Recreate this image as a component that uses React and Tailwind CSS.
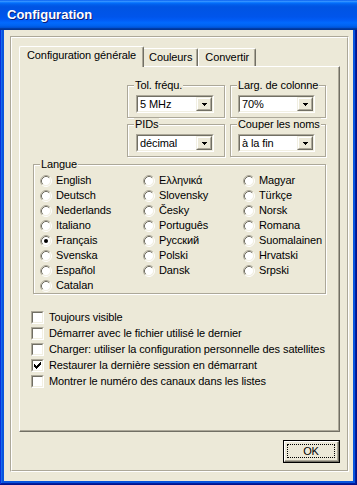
import React from 'react'

const Radio = ({ checked }) => (
  <svg width="12" height="12" viewBox="0 0 12 12" className="shrink-0">
    <circle cx="6" cy="6" r="4.5" fill="#fff" />
    <path d="M2.11 9.89A5.5 5.5 0 0 1 9.89 2.11" fill="none" stroke="#ACA899" />
    <path d="M9.89 2.11A5.5 5.5 0 0 1 2.11 9.89" fill="none" stroke="#fff" />
    <path d="M2.82 9.18A4.5 4.5 0 0 1 9.18 2.82" fill="none" stroke="#716F64" />
    <path d="M9.18 2.82A4.5 4.5 0 0 1 2.82 9.18" fill="none" stroke="#F1EFE2" />
    {checked && <circle cx="6" cy="6" r="2" fill="#000" />}
  </svg>
)

const Check = ({ checked }) => (
  <div className="w-[13px] h-[13px] shrink-0 border border-t-[#ACA899] border-l-[#ACA899] border-b-white border-r-white">
    <div className="w-full h-full border border-t-[#716F64] border-l-[#716F64] border-b-[#F1EFE2] border-r-[#F1EFE2] bg-white flex items-center justify-center">
      {checked && (
        <svg width="7" height="7" viewBox="0 0 7 7" shapeRendering="crispEdges">
          <path d="M6 0h1v1H6zM5 1h2v1H5zM0 2h1v1H0zM4 2h3v1H4zM0 3h2v1H0zM3 3h3v1H3zM0 4h5v1H0zM1 5h3v1H1zM2 6h1v1H2z" fill="#000" />
        </svg>
      )}
    </div>
  </div>
)

const ArrowButton = () => (
  <div className="w-[16px] h-full shrink-0 border border-t-[#F1EFE2] border-l-[#F1EFE2] border-b-[#716F64] border-r-[#716F64]">
    <div className="w-full h-full border border-t-white border-l-white border-b-[#ACA899] border-r-[#ACA899] bg-[#ECE9D8] flex items-center justify-center">
      <svg width="5" height="3" viewBox="0 0 5 3" shapeRendering="crispEdges">
        <path d="M0 0h5v1H0zM1 1h3v1H1zM2 2h1v1H2z" fill="#000" />
      </svg>
    </div>
  </div>
)

const Select = ({ value, width }) => (
  <div className={`h-[18px] border border-t-[#ACA899] border-l-[#ACA899] border-b-white border-r-white ${width}`}>
    <div className="h-full flex items-stretch border border-t-[#716F64] border-l-[#716F64] border-b-[#F1EFE2] border-r-[#F1EFE2] bg-white">
      <span className="flex-1 pl-[2px] leading-[14px]">{value}</span>
      <ArrowButton />
    </div>
  </div>
)

const Group = ({ label, className, children }) => (
  <div className={`relative border border-[#ACA899] shadow-[inset_1px_1px_0_#fff,1px_1px_0_#fff] ${className}`}>
    <span className="absolute top-[-7px] left-[6px] px-[1px] bg-[#ECE9D8] leading-[13px]">{label}</span>
    {children}
  </div>
)

const languages = [
  ['English', 'Deutsch', 'Nederlands', 'Italiano', 'Français', 'Svenska', 'Español', 'Catalan'],
  ['Ελληνικά', 'Slovensky', 'Česky', 'Português', 'Русский', 'Polski', 'Dansk'],
  ['Magyar', 'Türkçe', 'Norsk', 'Romana', 'Suomalainen', 'Hrvatski', 'Srpski'],
]

const options = [
  { label: 'Toujours visible', checked: false },
  { label: 'Démarrer avec le fichier utilisé le dernier', checked: false },
  { label: 'Charger: utiliser la configuration personnelle des satellites', checked: false },
  { label: 'Restaurer la dernière session en démarrant', checked: true },
  { label: 'Montrer le numéro des canaux dans les listes', checked: false },
]

export default function App() {
  return (
    <div className="w-[357px] h-[485px] flex flex-col bg-[#0855DD] shadow-[inset_-1px_-1px_#00138c,inset_1px_1px_#0831d9,inset_-2px_-2px_#001ea0,inset_2px_2px_#166aee] font-['Liberation_Sans',Arial,sans-serif] text-[11px] tracking-[-0.1px] text-black select-none">
      {/* barre de titre */}
      <div className="h-[30px] shrink-0 flex items-center pl-[7px] bg-[linear-gradient(180deg,#0058EE_0%,#3A93FF_4%,#288EFF_6%,#127DFF_8%,#036FFC_10%,#0262EE_14%,#0057E5_20%,#0054E3_24%,#0055EB_56%,#005BF5_66%,#026AFE_76%,#0062EF_86%,#0052D6_92%,#0040AB_94%,#003092_100%)]">
        <span className="text-white font-bold text-[13px] tracking-normal [text-shadow:1px_1px_0_#0A1E7A]">Configuration</span>
      </div>

      <div className="flex-1 flex flex-col mx-[4px] mb-[4px] bg-[#ECE9D8] pt-[6px] pl-[6px] pr-[4px] pb-[9px]">
        <div className="flex-1 border border-t-[#ACA899] border-l-[#ACA899] border-b-white border-r-white">
          <div className="h-full border border-t-white border-l-white border-b-[#ACA899] border-r-[#ACA899] flex flex-col px-[7px] pt-[8px] pb-[7px]">
            {/* onglets */}
            <div className="flex items-end h-[20px] shrink-0">
              <div className="relative z-10 h-[21px] -mb-px pl-[7px] pr-[7px] pt-[2px] leading-[13px] bg-[#ECE9D8] border-t border-l border-r border-t-white border-l-white border-r-[#716F64] shadow-[inset_-1px_0_0_#ACA899] rounded-t-[2px]">
                Configuration générale
              </div>
              <div className="h-[18px] px-[5px] pt-[2px] leading-[13px] border-t border-r border-t-white border-r-[#716F64] shadow-[inset_-1px_0_0_#ACA899] rounded-tr-[2px]">
                Couleurs
              </div>
              <div className="h-[18px] px-[6px] pt-[2px] leading-[13px] border-t border-l border-r border-t-white border-l-white border-r-[#716F64] shadow-[inset_-1px_0_0_#ACA899] rounded-t-[2px]">
                Convertir
              </div>
            </div>

            {/* panneau */}
            <div className="h-[366px] shrink-0 flex flex-col bg-[#ECE9D8] border border-t-white border-l-white border-r-[#716F64] border-b-[#716F64] shadow-[inset_-1px_-1px_0_#ACA899]">
              <div className="ml-[107px] mt-[18px] flex flex-col gap-[6px]">
                <div className="flex gap-[5px]">
                  <Group label="Tol. fréqu." className="w-[98px] h-[33px] pt-[9px] pl-[8px]">
                    <Select value="5 MHz" width="w-[78px]" />
                  </Group>
                  <Group label="Larg. de colonne" className="w-[96px] h-[33px] pt-[9px] pl-[7px]">
                    <Select value="70%" width="w-[77px]" />
                  </Group>
                </div>
                <div className="flex gap-[5px]">
                  <Group label="PIDs" className="w-[98px] h-[33px] pt-[9px] pl-[8px]">
                    <Select value="décimal" width="w-[78px]" />
                  </Group>
                  <Group label="Couper les noms" className="w-[96px] h-[33px] pt-[9px] pl-[7px]">
                    <Select value="à la fin" width="w-[77px]" />
                  </Group>
                </div>
              </div>

              <Group label="Langue" className="ml-[13px] mt-[7px] w-[293px] h-[130px] pt-[8px] pl-[6px] flex">
                {languages.map((col, i) => (
                  <div key={i} className={`flex flex-col ${i === 0 ? 'w-[103px]' : i === 1 ? 'w-[100px]' : ''}`}>
                    {col.map((lang) => (
                      <div key={lang} className="h-[15px] flex items-center gap-[4px] leading-[13px]">
                        <Radio checked={lang === 'Français'} />
                        <span>{lang}</span>
                      </div>
                    ))}
                  </div>
                ))}
              </Group>

              <div className="ml-[11px] mt-[15px] flex flex-col">
                {options.map((o) => (
                  <div key={o.label} className="h-[16px] flex items-center gap-[5px] leading-[13px]">
                    <Check checked={o.checked} />
                    <span>{o.label}</span>
                  </div>
                ))}
              </div>
            </div>

            {/* bouton OK */}
            <div className="flex justify-end mt-[8px]">
              <div className="w-[57px] h-[23px] border border-black">
                <div className="h-full border border-t-white border-l-white border-b-[#716F64] border-r-[#716F64] shadow-[inset_-1px_-1px_0_#ACA899] bg-[#ECE9D8] pt-[2px] pl-[2px] pr-[3px] pb-[3px]">
                  <div className="h-full border border-dotted border-black flex items-center justify-center leading-[13px]">OK</div>
                </div>
              </div>
            </div>
          </div>
        </div>
      </div>
    </div>
  )
}
